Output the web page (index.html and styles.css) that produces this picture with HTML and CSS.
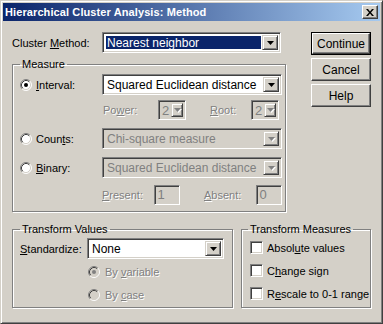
FILE: index.html
```html
<!DOCTYPE html>
<html lang="en">
<head>
    <meta charset="UTF-8">
    <title>Hierarchical Cluster Analysis: Method</title>
    <link rel="stylesheet" href="styles.css">
</head>
<body>
    <div class="window">
        <div class="titlebar">
            <span class="title">Hierarchical Cluster Analysis: Method</span>
            <span class="close">
                <svg width="8" height="7" viewBox="0 0 8 7"><path d="M0 0h2l2 2.5 2-2.5h2l-3 3.5 3 3.5h-2l-2-2.5-2 2.5h-2l3-3.5z" fill="#000"/></svg>
            </span>
        </div>

        <div class="client">
            <div class="top">
                <div class="main">
                    <div class="method-row">
                        <span class="method-label">Cluster <u>M</u>ethod:</span>
                        <div class="combo method-combo">
                            <span class="value selected">Nearest neighbor</span>
                            <span class="drop"><svg width="7" height="4" viewBox="0 0 7 4"><path d="M0 0h7l-3.5 4z" fill="#000"/></svg></span>
                        </div>
                    </div>

                    <fieldset class="group measure">
                        <legend>Measure</legend>

                        <div class="mrow">
                            <span class="opt">
                                <svg class="radio" width="12" height="12" viewBox="0 0 12 12"><circle cx="6" cy="6" r="5" fill="#fff"/><path d="M2.11 9.89A5.5 5.5 0 0 1 9.89 2.11" stroke="#808080" fill="none"/><path d="M9.89 2.11A5.5 5.5 0 0 1 2.11 9.89" stroke="#fff" fill="none"/><path d="M2.82 9.18A4.5 4.5 0 0 1 9.18 2.82" stroke="#404040" fill="none"/><path d="M9.18 2.82A4.5 4.5 0 0 1 2.82 9.18" stroke="#d4d0c8" fill="none"/><circle cx="6" cy="6" r="2" fill="#000"/></svg>
                                <span><u>I</u>nterval:</span>
                            </span>
                            <div class="combo wide">
                                <span class="value">Squared Euclidean distance</span>
                                <span class="drop"><svg width="7" height="4" viewBox="0 0 7 4"><path d="M0 0h7l-3.5 4z" fill="#000"/></svg></span>
                            </div>
                        </div>

                        <div class="mrow sub power-row">
                            <span class="sublabel off">Po<u>w</u>er:</span>
                            <div class="combo tiny off">
                                <span class="value">2</span>
                                <span class="drop"><svg width="7" height="4" viewBox="0 0 7 4"><path d="M0 0h7l-3.5 4z" fill="#808080"/></svg></span>
                            </div>
                            <span class="sublabel second off"><u>R</u>oot:</span>
                            <div class="combo tiny off">
                                <span class="value">2</span>
                                <span class="drop"><svg width="7" height="4" viewBox="0 0 7 4"><path d="M0 0h7l-3.5 4z" fill="#808080"/></svg></span>
                            </div>
                        </div>

                        <div class="mrow counts-row">
                            <span class="opt">
                                <svg class="radio" width="12" height="12" viewBox="0 0 12 12"><circle cx="6" cy="6" r="5" fill="#fff"/><path d="M2.11 9.89A5.5 5.5 0 0 1 9.89 2.11" stroke="#808080" fill="none"/><path d="M9.89 2.11A5.5 5.5 0 0 1 2.11 9.89" stroke="#fff" fill="none"/><path d="M2.82 9.18A4.5 4.5 0 0 1 9.18 2.82" stroke="#404040" fill="none"/><path d="M9.18 2.82A4.5 4.5 0 0 1 2.82 9.18" stroke="#d4d0c8" fill="none"/></svg>
                                <span>Coun<u>t</u>s:</span>
                            </span>
                            <div class="combo wide off">
                                <span class="value">Chi-square measure</span>
                                <span class="drop"><svg width="7" height="4" viewBox="0 0 7 4"><path d="M0 0h7l-3.5 4z" fill="#808080"/></svg></span>
                            </div>
                        </div>

                        <div class="mrow binary-row">
                            <span class="opt">
                                <svg class="radio" width="12" height="12" viewBox="0 0 12 12"><circle cx="6" cy="6" r="5" fill="#fff"/><path d="M2.11 9.89A5.5 5.5 0 0 1 9.89 2.11" stroke="#808080" fill="none"/><path d="M9.89 2.11A5.5 5.5 0 0 1 2.11 9.89" stroke="#fff" fill="none"/><path d="M2.82 9.18A4.5 4.5 0 0 1 9.18 2.82" stroke="#404040" fill="none"/><path d="M9.18 2.82A4.5 4.5 0 0 1 2.82 9.18" stroke="#d4d0c8" fill="none"/></svg>
                                <span><u>B</u>inary:</span>
                            </span>
                            <div class="combo wide off">
                                <span class="value">Squared Euclidean distance</span>
                                <span class="drop"><svg width="7" height="4" viewBox="0 0 7 4"><path d="M0 0h7l-3.5 4z" fill="#808080"/></svg></span>
                            </div>
                        </div>

                        <div class="mrow sub present-row">
                            <span class="sublabel off"><u>P</u>resent:</span>
                            <div class="edit off">1</div>
                            <span class="sublabel second off"><u>A</u>bsent:</span>
                            <div class="edit off">0</div>
                        </div>
                    </fieldset>
                </div>

                <div class="buttons">
                    <div class="btn default"><span>Continue</span></div>
                    <div class="btn">Cancel</div>
                    <div class="btn">Help</div>
                </div>
            </div>

            <div class="bottom">
                <fieldset class="group values">
                    <legend>Transform Values</legend>
                    <div class="std-row">
                        <span class="std-label"><u>S</u>tandardize:</span>
                        <div class="combo std-combo">
                            <span class="value">None</span>
                            <span class="drop"><svg width="7" height="4" viewBox="0 0 7 4"><path d="M0 0h7l-3.5 4z" fill="#000"/></svg></span>
                        </div>
                    </div>
                    <div class="by-row first off">
                        <svg class="radio" width="12" height="12" viewBox="0 0 12 12"><circle cx="6" cy="6" r="5" fill="#d4d0c8"/><path d="M2.11 9.89A5.5 5.5 0 0 1 9.89 2.11" stroke="#808080" fill="none"/><path d="M9.89 2.11A5.5 5.5 0 0 1 2.11 9.89" stroke="#fff" fill="none"/><path d="M2.82 9.18A4.5 4.5 0 0 1 9.18 2.82" stroke="#404040" fill="none"/><path d="M9.18 2.82A4.5 4.5 0 0 1 2.82 9.18" stroke="#d4d0c8" fill="none"/><circle cx="6" cy="6" r="2" fill="#808080"/></svg>
                        <span>By <u>v</u>ariable</span>
                    </div>
                    <div class="by-row off">
                        <svg class="radio" width="12" height="12" viewBox="0 0 12 12"><circle cx="6" cy="6" r="5" fill="#d4d0c8"/><path d="M2.11 9.89A5.5 5.5 0 0 1 9.89 2.11" stroke="#808080" fill="none"/><path d="M9.89 2.11A5.5 5.5 0 0 1 2.11 9.89" stroke="#fff" fill="none"/><path d="M2.82 9.18A4.5 4.5 0 0 1 9.18 2.82" stroke="#404040" fill="none"/><path d="M9.18 2.82A4.5 4.5 0 0 1 2.82 9.18" stroke="#d4d0c8" fill="none"/></svg>
                        <span>By <u>c</u>ase</span>
                    </div>
                </fieldset>

                <fieldset class="group measures">
                    <legend>Transform Measures</legend>
                    <div class="check-row first"><span class="check"></span><span>Absol<u>u</u>te values</span></div>
                    <div class="check-row"><span class="check"></span><span>C<u>h</u>ange sign</span></div>
                    <div class="check-row"><span class="check"></span><span>R<u>e</u>scale to 0-1 range</span></div>
                </fieldset>
            </div>
        </div>
    </div>
</body>
</html>
```

FILE: styles.css
```css
/* Classic dialog look */
body {
    margin: 0;
    background-color: #d4d0c8;
    font-family: 'Liberation Sans', Arial, sans-serif;
    font-size: 11px;
    color: #000;
}

u {
    text-decoration-thickness: 1px;
    text-underline-offset: 1px;
}

.window {
    width: 383px;
    height: 324px;
    box-sizing: border-box;
    padding: 2px;
    border: 1px solid;
    border-color: #d4d0c8 #404040 #404040 #d4d0c8;
    box-shadow: inset 1px 1px 0 #fff, inset -1px -1px 0 #808080;
    background-color: #d4d0c8;
}

.titlebar {
    height: 18px;
    display: flex;
    align-items: center;
    justify-content: space-between;
    padding: 0 2px 0 2px;
    background: linear-gradient(to right, #0a246a, #a6caf0);
}

.title {
    color: #fff;
    font-weight: bold;
    font-size: 11px;
    letter-spacing: 0.1px;
}

.close {
    width: 16px;
    height: 14px;
    box-sizing: border-box;
    display: flex;
    align-items: center;
    justify-content: center;
    border: 1px solid;
    border-color: #fff #404040 #404040 #fff;
    box-shadow: inset -1px -1px 0 #808080;
    background-color: #d4d0c8;
}

.client {
    padding: 11px 0 0 9px;
}

.top {
    display: flex;
}

.main {
    width: 274px;
}

.method-row {
    display: flex;
    align-items: center;
}

.method-label {
    width: 90px;
}

/* sunken field with a drop button */
.combo {
    display: flex;
    height: 21px;
    box-sizing: border-box;
    padding: 2px;
    border: 1px solid;
    border-color: #808080 #fff #fff #808080;
    box-shadow: inset 1px 1px 0 #404040, inset -1px -1px 0 #d4d0c8;
    background-color: #fff;
}

.combo .value {
    flex: 1;
    padding-left: 2px;
    line-height: 17px;
    font-size: 12px;
    white-space: nowrap;
    overflow: hidden;
}

.combo .value.selected {
    margin: 1px;
    line-height: 15px;
    padding-left: 1px;
    background-color: #0a246a;
    color: #fff;
}

.combo .drop {
    width: 16px;
    box-sizing: border-box;
    display: flex;
    align-items: center;
    justify-content: center;
    border: 1px solid;
    border-color: #d4d0c8 #404040 #404040 #d4d0c8;
    box-shadow: inset 1px 1px 0 #fff, inset -1px -1px 0 #808080;
    background-color: #d4d0c8;
}

.combo.off {
    background-color: #d4d0c8;
}

.combo.off .value {
    color: #808080;
}

.combo.off .drop svg {
    filter: drop-shadow(1px 1px 0 #fff);
}

.method-combo {
    width: 179px;
}

.wide {
    width: 180px;
}

.tiny {
    width: 28px;
    height: 20px;
}

.tiny .value {
    padding-left: 1px;
    font-size: 13px;
    line-height: 16px;
}

.tiny .drop {
    width: 12px;
}

.edit {
    width: 28px;
    height: 20px;
    box-sizing: border-box;
    padding: 1px 3px;
    border: 1px solid;
    border-color: #808080 #fff #fff #808080;
    box-shadow: inset 1px 1px 0 #404040, inset -1px -1px 0 #d4d0c8;
    font-size: 13px;
    line-height: 16px;
}

.off {
    color: #808080;
    text-shadow: 1px 1px 0 #fff;
}

.combo.off .value, .edit.off {
    text-shadow: none;
}

/* etched group boxes */
.group {
    margin: 0;
    min-width: 0;
    box-sizing: border-box;
    border: 1px solid #808080;
    box-shadow: 1px 1px 0 #fff, inset 1px 1px 0 #fff;
}

.group legend {
    padding: 0 2px;
    line-height: 13px;
}

.measure {
    width: 274px;
    margin-top: 5px;
    padding: 3px 3px 6px 7px;
}

.mrow {
    display: flex;
    align-items: center;
}

.opt {
    width: 82px;
    display: flex;
    align-items: center;
}

.radio {
    flex: none;
    margin-right: 4px;
}

.sub {
    padding-left: 83px;
}

.sublabel {
    width: 55px;
}

.sublabel.second {
    width: 41px;
    margin-left: 24px;
}

.power-row {
    margin-top: 5px;
}

.counts-row {
    margin-top: 8px;
}

.binary-row {
    margin-top: 8px;
}

.present-row {
    margin-top: 7px;
    padding-left: 82px;
}

.present-row .sublabel {
    width: 56px;
}

.buttons {
    margin-left: 25px;
    display: flex;
    flex-direction: column;
    gap: 3px;
}

.btn {
    width: 60px;
    height: 23px;
    box-sizing: border-box;
    display: flex;
    align-items: center;
    justify-content: center;
    border: 1px solid;
    border-color: #fff #404040 #404040 #fff;
    box-shadow: inset -1px -1px 0 #808080;
    font-size: 12px;
}

.btn.default {
    border: 1px solid #000;
    box-shadow: none;
    padding: 0;
}

.btn.default span {
    width: 100%;
    height: 100%;
    box-sizing: border-box;
    display: flex;
    align-items: center;
    justify-content: center;
    border: 1px solid;
    border-color: #fff #404040 #404040 #fff;
    box-shadow: inset -1px -1px 0 #808080;
}

.bottom {
    display: flex;
    gap: 8px;
    margin-top: 11px;
}

.values {
    width: 221px;
    padding: 2px 6px 6px 7px;
}

.std-row {
    display: flex;
    align-items: center;
}

.std-label {
    width: 67px;
}

.std-combo {
    width: 137px;
}

.by-row {
    display: flex;
    align-items: center;
    height: 13px;
    margin-top: 10px;
    padding-left: 68px;
}

.by-row.first {
    margin-top: 6px;
}

.by-row .radio {
    margin-right: 5px;
}

.measures {
    width: 130px;
    padding: 5px 2px 6px 6px;
}

.check-row {
    display: flex;
    align-items: center;
    height: 13px;
    margin-top: 10px;
    padding-left: 2px;
    white-space: nowrap;
}

.check-row.first {
    margin-top: 0;
}

.check {
    flex: none;
    width: 13px;
    height: 13px;
    box-sizing: border-box;
    margin-right: 4px;
    border: 1px solid;
    border-color: #808080 #fff #fff #808080;
    box-shadow: inset 1px 1px 0 #404040, inset -1px -1px 0 #d4d0c8;
    background-color: #fff;
}
```
